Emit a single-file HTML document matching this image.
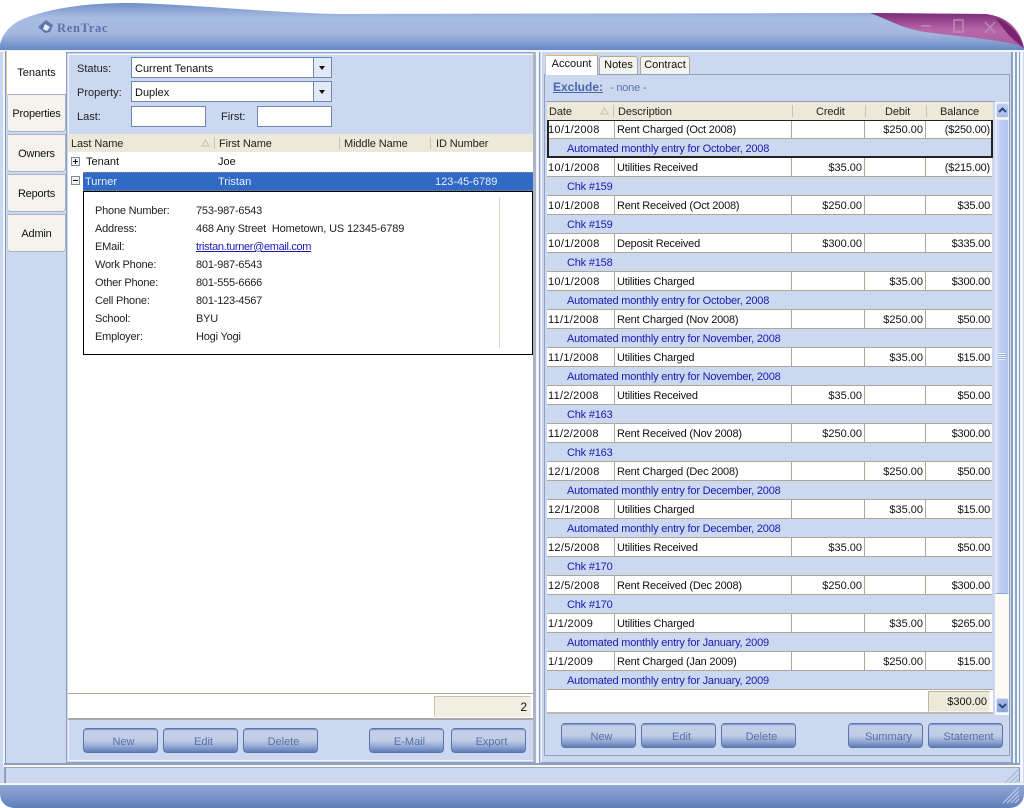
<!DOCTYPE html>
<html><head><meta charset="utf-8"><title>RenTrac</title>
<style>
html,body{margin:0;padding:0;background:#fff}
#p{position:relative;width:1024px;height:808px;overflow:hidden;background:#fff;font:11px/14px "Liberation Sans",sans-serif;color:#111}
#p div,#p span,#p a{position:absolute;display:block;white-space:nowrap;box-sizing:border-box}
.tab{left:7px;width:59px;background:#f4f3ee;border:1px solid #a9b4c8;border-left:1px solid #c8cfdc;border-radius:0 0 4px 4px;text-align:center;letter-spacing:-.2px}
.tab span{left:0;width:100%;top:12px;text-align:center}
.lbl{color:#222;font-size:11px}
.inp{background:#fff;border:1px solid #6f86ae;height:21px}
.inp span{left:3px;top:3px;font-size:11px}
.dd{right:0;top:0;bottom:0;width:18px;background:#e2e9f7;border-left:1px solid #6f86ae}
.dd:after{content:"";position:absolute;left:5px;top:8px;border:3px solid transparent;border-top:4px solid #111;border-bottom:0}
.hd{background:#ece9d8;height:18px;letter-spacing:-.1px}
.hd span{top:3px;color:#222}
.sep{top:3px;width:1px;height:12px;background:#c8c5b2}
.btn{height:25px;width:75px;border-radius:4px;border:1px solid #5a76ae;background:linear-gradient(#6f8bc0 0,#c4d0e8 8%,#c0cde6 50%,#8ea4d0 78%,#5f7db8 100%);color:#5670a6;text-align:center;line-height:26px;font-size:11px;padding-left:6px}
.r{left:547px;width:445px;height:19px;background:#fff;border-bottom:1px solid #aca899;letter-spacing:-.2px}
.r .d{left:0;width:68px;height:18px;padding-left:1px;top:0;line-height:20px;border-right:1px solid #aca899;letter-spacing:.3px}
.r .s{left:68px;width:177px;height:18px;padding-left:2px;top:0;line-height:20px;border-right:1px solid #aca899}
.r .c{left:245px;width:73px;height:18px;padding-right:2px;top:0;line-height:20px;text-align:right;border-right:1px solid #aca899;letter-spacing:0}
.r .e{left:318px;width:61px;height:18px;padding-right:2px;top:0;line-height:20px;text-align:right;border-right:1px solid #aca899;letter-spacing:0}
.r .b{left:379px;width:66px;height:18px;padding-right:2px;top:0;line-height:20px;text-align:right}
.n{left:547px;width:445px;height:19px;background:#ccd8f0;border-bottom:1px solid #aca899;color:#1a1ab0;padding-left:20px;line-height:20px;letter-spacing:-.2px}
.k{left:95px;color:#222;letter-spacing:-.2px}.v{left:196px;color:#222;letter-spacing:-.2px}
.pm{left:71px;width:9px;height:9px;border:1px solid #7f8a9c;background:#f2f2f2}
.pm:before{content:"";position:absolute;left:1px;top:3px;width:5px;height:1px;background:#111}
.rt{background:#f4f3ee;border:1px solid #a9a89a;border-bottom:0;border-radius:3px 3px 0 0;text-align:center}
.l{background:#8ea0bf}
.w{background:#f2f5fb}
</style></head><body>
<div id="p">
<svg style="position:absolute;left:0;top:0" width="1024" height="60" viewBox="0 0 1024 60">
<defs>
<linearGradient id="g" x1="0" y1="0" x2="0" y2="1"><stop offset="0" stop-color="#6f8fc9"/><stop offset=".3" stop-color="#a9bde2"/><stop offset=".62" stop-color="#a4b8df"/><stop offset="1" stop-color="#5e82c0"/></linearGradient>
<linearGradient id="m" x1="0" y1="0" x2="0" y2="1"><stop offset="0" stop-color="#7d2c78"/><stop offset=".5" stop-color="#b868aa"/><stop offset="1" stop-color="#a85a9e"/></linearGradient>
</defs>
<path d="M0 52V44C4 30 14 22 28 17C60 6 95 3 130 3C190 4 270 13 340 14L870 13L985 14C1006 16 1020 28 1024 48V52Z" fill="url(#g)"/>
<path d="M870 13L985 14C1006 16 1020 28 1024 48C1012 40 960 37 925 32C900 28 890 20 870 13Z" fill="url(#m)"/>
<path d="M1024 48C1020 32 1008 22 996 18C1002 28 1010 38 1024 48Z" fill="#7a2470"/>
<g fill="none" stroke="#b98ab8" stroke-width="1.500"><path d="M921 26H931"/><path d="M954 20H963V32H954Z"/><path d="M985 22L995 33M995 22L985 33"/></g>
<path d="M38 27L46 20L53 25L50 32L45 33Z" fill="#5d78ad"/><path d="M45 24L50 27L47 31L43 29Z" fill="#e9eef7"/>
</svg>
<div style="left:57px;top:20px;font:bold 12.5px/16px 'Liberation Serif',serif;color:#5a72a8;letter-spacing:.7px">RenTrac</div>

<div style="left:0;top:50px;width:1024px;height:736px;background:#ccd8f0"></div>
<div class="w" style="left:0;top:50px;width:1024px;height:2px"></div>
<div class="w" style="left:3px;top:51px;width:2px;height:715px"></div>
<div class="l" style="left:5px;top:51px;width:1px;height:733px;background:#7d97c6"></div>
<div class="l" style="left:1012px;top:52px;width:1px;height:714px"></div>
<div class="w" style="left:1013px;top:52px;width:2px;height:714px"></div>
<div class="l" style="left:1015px;top:52px;width:2px;height:714px;background:#8ea6cf"></div>
<div class="w" style="left:1017px;top:52px;width:2px;height:714px"></div>
<div class="l" style="left:1019px;top:52px;width:1px;height:730px;background:#7d97c6"></div>
<div class="w" style="left:1020px;top:52px;width:3px;height:730px"></div>

<!-- left tabs -->
<div style="left:6px;top:51px;width:60px;height:43px;background:#fff;border-left:1px solid #e8c58a"><span style="left:0;width:100%;top:14px;text-align:center;font-size:11px;line-height:16px">Tenants</span></div>
<div class="tab" style="top:94px;height:38px"><span>Properties</span></div>
<div class="tab" style="top:134px;height:38px"><span>Owners</span></div>
<div class="tab" style="top:174px;height:38px"><span>Reports</span></div>
<div class="tab" style="top:214px;height:38px"><span>Admin</span></div>

<!-- left panel -->
<div style="left:66px;top:52px;width:468px;height:711px;border:1px solid #8ea0bf;border-right:0"></div>
<div style="left:68px;top:54px;width:466px;height:707px;border:1px solid #f2f5fb;border-right:0"></div>
<div class="lbl" style="left:77px;top:61px;line-height:16px">Status:</div>
<div class="lbl" style="left:77px;top:85px;line-height:16px">Property:</div>
<div class="lbl" style="left:77px;top:109px;line-height:16px">Last:</div>
<div class="lbl" style="left:221px;top:109px;line-height:16px">First:</div>
<div class="inp" style="left:131px;top:57px;width:201px"><span style="top:4px">Current Tenants</span><div class="dd"></div></div>
<div class="inp" style="left:131px;top:81px;width:201px"><span style="top:4px">Duplex</span><div class="dd"></div></div>
<div class="inp" style="left:131px;top:106px;width:75px"></div>
<div class="inp" style="left:257px;top:106px;width:75px"></div>

<div style="left:68px;top:134px;width:465px;height:585px;background:#fff"></div>
<div class="hd" style="left:68px;top:134px;width:465px"><span style="left:3px">Last Name</span><svg style="position:absolute;left:133px;top:5px" width="9" height="8"><path d="M4.500 1L8 7H1Z" fill="none" stroke="#c4c2b0"/></svg><div class="sep" style="left:146px"></div><span style="left:151px">First Name</span><div class="sep" style="left:271px"></div><span style="left:276px">Middle Name</span><div class="sep" style="left:362px"></div><span style="left:368px">ID Number</span></div>
<div class="pm" style="top:157px"></div><div style="left:75px;top:159px;width:1px;height:5px;background:#111"></div>
<div style="left:86px;top:155px;font-size:11px;line-height:14px">Tenant</div><div style="left:218px;top:155px;font-size:11px">Joe</div>
<div class="pm" style="top:176px"></div>
<div style="left:83px;top:172px;width:450px;height:19px;background:#316ac5;border-top:1px dotted #8a8a8a;border-bottom:1px dotted #8a8a8a;color:#e8eefa"><span style="left:2px;top:2px;font-size:11px">Turner</span><span style="left:135px;top:2px;font-size:11px">Tristan</span><span style="left:352px;top:2px;font-size:11px">123-45-6789</span></div>
<div style="left:83px;top:191px;width:450px;height:164px;border:1px solid #000;background:#fff"></div>
<div style="left:499px;top:198px;width:1px;height:150px;background:#d8d6c8"></div>
<div class="k" style="top:204px">Phone Number:</div><div class="v" style="top:204px">753-987-6543</div>
<div class="k" style="top:222px">Address:</div><div class="v" style="top:222px;letter-spacing:-.15px">468 Any Street&nbsp; Hometown, US 12345-6789</div>
<div class="k" style="top:240px">EMail:</div><a class="v" style="top:240px;color:#1a1ab0;text-decoration:underline;letter-spacing:-.33px">tristan.turner@email.com</a>
<div class="k" style="top:258px">Work Phone:</div><div class="v" style="top:258px">801-987-6543</div>
<div class="k" style="top:276px">Other Phone:</div><div class="v" style="top:276px">801-555-6666</div>
<div class="k" style="top:294px">Cell Phone:</div><div class="v" style="top:294px">801-123-4567</div>
<div class="k" style="top:312px">School:</div><div class="v" style="top:312px">BYU</div>
<div class="k" style="top:330px">Employer:</div><div class="v" style="top:330px">Hogi Yogi</div>
<div style="left:68px;top:693px;width:465px;height:1px;background:#aca899"></div>
<div style="left:68px;top:718px;width:465px;height:2px;background:#a8a8a8"></div>
<div style="left:434px;top:696px;width:97px;height:21px;background:#f1efe2;border:1px solid #c4c2b0;border-right-color:#eee;border-bottom-color:#eee;text-align:right;padding-right:3px;line-height:21px;font-size:12px">2</div>
<div class="btn" style="left:83px;top:728px">New</div>
<div class="btn" style="left:163px;top:728px">Edit</div>
<div class="btn" style="left:243px;top:728px">Delete</div>
<div class="btn" style="left:369px;top:728px">E-Mail</div>
<div class="btn" style="left:451px;top:728px">Export</div>

<!-- splitter -->
<div style="left:533px;top:52px;width:3px;height:711px;background:#aab4c4"></div>
<div style="left:536px;top:52px;width:3px;height:711px;background:#f2f5fb"></div>
<div style="left:539px;top:52px;width:1px;height:711px;background:#8ea0bf"></div>

<!-- right panel -->
<div style="left:541px;top:52px;width:471px;height:711px;border:1px solid #8ea0bf;border-top:0;border-left:0;box-shadow:inset 1px 0 0 #f2f5fb"></div>
<div style="left:544px;top:74px;width:466px;height:682px;border:1px solid #8ea0bf"></div>
<div style="left:545px;top:55px;width:53px;height:20px;background:#fff;border-top:1px solid #e8b860;border-left:1px solid #c0c8d8;border-right:1px solid #8ea0bf;text-align:center;line-height:16px">Account</div>
<div class="rt" style="left:599px;top:56px;width:39px;height:18px;line-height:16px">Notes</div>
<div class="rt" style="left:640px;top:56px;width:50px;height:18px;line-height:16px">Contract</div>
<div style="left:553px;top:80px;font-weight:bold;font-size:12px;color:#4a68a8;text-decoration:underline">Exclude:</div>
<div style="left:610px;top:81px;color:#5a72a8;letter-spacing:-.2px">- none -</div>

<div style="left:546px;top:101px;width:449px;height:1px;background:#8ea0bf"></div>
<div class="hd" style="left:547px;top:102px;width:446px"><span style="left:2px">Date</span><svg style="position:absolute;left:53px;top:5px" width="9" height="8"><path d="M4.500 1L8 7H1Z" fill="none" stroke="#c4c2b0"/></svg><div class="sep" style="left:66px"></div><span style="left:71px">Description</span><div class="sep" style="left:245px"></div><span style="left:269px">Credit</span><div class="sep" style="left:318px"></div><span style="left:338px">Debit</span><div class="sep" style="left:379px"></div><span style="left:393px">Balance</span></div>

<div class="r" style="top:120px"><span class="d">10/1/2008</span><span class="s">Rent Charged (Oct 2008)</span><span class="c"></span><span class="e">$250.00</span><span class="b">($250.00)</span></div><div class="n" style="top:139px">Automated monthly entry for October, 2008</div>
<div class="r" style="top:158px"><span class="d">10/1/2008</span><span class="s">Utilities Received</span><span class="c">$35.00</span><span class="e"></span><span class="b">($215.00)</span></div><div class="n" style="top:177px">Chk #159</div>
<div class="r" style="top:196px"><span class="d">10/1/2008</span><span class="s">Rent Received (Oct 2008)</span><span class="c">$250.00</span><span class="e"></span><span class="b">$35.00</span></div><div class="n" style="top:215px">Chk #159</div>
<div class="r" style="top:234px"><span class="d">10/1/2008</span><span class="s">Deposit Received</span><span class="c">$300.00</span><span class="e"></span><span class="b">$335.00</span></div><div class="n" style="top:253px">Chk #158</div>
<div class="r" style="top:272px"><span class="d">10/1/2008</span><span class="s">Utilities Charged</span><span class="c"></span><span class="e">$35.00</span><span class="b">$300.00</span></div><div class="n" style="top:291px">Automated monthly entry for October, 2008</div>
<div class="r" style="top:310px"><span class="d">11/1/2008</span><span class="s">Rent Charged (Nov 2008)</span><span class="c"></span><span class="e">$250.00</span><span class="b">$50.00</span></div><div class="n" style="top:329px">Automated monthly entry for November, 2008</div>
<div class="r" style="top:348px"><span class="d">11/1/2008</span><span class="s">Utilities Charged</span><span class="c"></span><span class="e">$35.00</span><span class="b">$15.00</span></div><div class="n" style="top:367px">Automated monthly entry for November, 2008</div>
<div class="r" style="top:386px"><span class="d">11/2/2008</span><span class="s">Utilities Received</span><span class="c">$35.00</span><span class="e"></span><span class="b">$50.00</span></div><div class="n" style="top:405px">Chk #163</div>
<div class="r" style="top:424px"><span class="d">11/2/2008</span><span class="s">Rent Received (Nov 2008)</span><span class="c">$250.00</span><span class="e"></span><span class="b">$300.00</span></div><div class="n" style="top:443px">Chk #163</div>
<div class="r" style="top:462px"><span class="d">12/1/2008</span><span class="s">Rent Charged (Dec 2008)</span><span class="c"></span><span class="e">$250.00</span><span class="b">$50.00</span></div><div class="n" style="top:481px">Automated monthly entry for December, 2008</div>
<div class="r" style="top:500px"><span class="d">12/1/2008</span><span class="s">Utilities Charged</span><span class="c"></span><span class="e">$35.00</span><span class="b">$15.00</span></div><div class="n" style="top:519px">Automated monthly entry for December, 2008</div>
<div class="r" style="top:538px"><span class="d">12/5/2008</span><span class="s">Utilities Received</span><span class="c">$35.00</span><span class="e"></span><span class="b">$50.00</span></div><div class="n" style="top:557px">Chk #170</div>
<div class="r" style="top:576px"><span class="d">12/5/2008</span><span class="s">Rent Received (Dec 2008)</span><span class="c">$250.00</span><span class="e"></span><span class="b">$300.00</span></div><div class="n" style="top:595px">Chk #170</div>
<div class="r" style="top:614px"><span class="d">1/1/2009</span><span class="s">Utilities Charged</span><span class="c"></span><span class="e">$35.00</span><span class="b">$265.00</span></div><div class="n" style="top:633px">Automated monthly entry for January, 2009</div>
<div class="r" style="top:652px"><span class="d">1/1/2009</span><span class="s">Rent Charged (Jan 2009)</span><span class="c"></span><span class="e">$250.00</span><span class="b">$15.00</span></div><div class="n" style="top:671px">Automated monthly entry for January, 2009</div>
<div style="left:547px;top:120px;width:446px;height:38px;border:2px solid #222;border-top-width:1px"></div>
<div style="left:547px;top:689px;width:446px;height:25px;background:#fff;border-top:1px solid #aca899;border-bottom:2px solid #b8b8b0"></div>
<div style="left:928px;top:691px;width:62px;height:21px;background:#ece9d8;border:1px solid #b8b6a4;border-right-color:#f4f4ee;border-bottom-color:#f4f4ee;text-align:right;padding-right:2px;line-height:21px;font-size:11px">$300.00</div>

<!-- scrollbar -->
<div style="left:995px;top:102px;width:14px;height:613px;background:#fbfaf5"></div>
<div style="left:996px;top:103px;width:13px;height:15px;background:linear-gradient(#c0cff0,#a8bce8);border:1px solid #dfe6f6;border-radius:2px"></div>
<svg style="position:absolute;left:996px;top:103px" width="13" height="15"><path d="M3 9L6.500 5.500L10 9" fill="none" stroke="#2c4a80" stroke-width="2"/></svg>
<div style="left:995px;top:119px;width:14px;height:475px;background:linear-gradient(90deg,#dbe4f8,#bccdf2 40%,#b4c6ee);border:1px solid #e4eafa;border-bottom:1px solid #8ea6d8"></div>
<div style="left:998px;top:353px;width:7px;height:7px;background:repeating-linear-gradient(#eef2fb 0,#eef2fb 1px,#9ab0dc 1px,#9ab0dc 2px)"></div>
<div style="left:996px;top:698px;width:13px;height:15px;background:linear-gradient(#a8bce8,#8ea8dc);border:1px solid #dfe6f6;border-radius:2px"></div>
<svg style="position:absolute;left:996px;top:698px" width="13" height="15"><path d="M3 6L6.500 9.500L10 6" fill="none" stroke="#2c4a80" stroke-width="2"/></svg>

<div class="btn" style="left:561px;top:723px">New</div>
<div class="btn" style="left:641px;top:723px">Edit</div>
<div class="btn" style="left:721px;top:723px">Delete</div>
<div class="btn" style="left:848px;top:723px">Summary</div>
<div class="btn" style="left:928px;top:723px">Statement</div>

<!-- status + bottom -->
<div style="left:4px;top:763px;width:1016px;height:2px;background:#8ea0bf"></div>
<div style="left:4px;top:765px;width:1016px;height:2px;background:#f2f5fb"></div>
<div style="left:4px;top:767px;width:1016px;height:1px;background:#a8a8a8"></div>
<div style="left:4px;top:768px;width:1px;height:15px;background:#a8a8a8"></div>
<svg style="position:absolute;left:1004px;top:768px" width="16" height="16"><path d="M15 1L1 15M15 6L6 15M15 11L11 15" stroke="#a8b4cc" stroke-width="1"/></svg>
<div style="left:0;top:783px;width:1024px;height:2px;background:#f2f5fb"></div>
<div style="left:0;top:785px;width:1024px;height:23px;background:linear-gradient(#8fa5d4,#7d96cb 45%,#5f7fba);border-radius:0 0 14px 14px"></div>
<svg style="position:absolute;left:1002px;top:786px" width="18" height="18"><path d="M17 1L1 17M17 5L5 17M17 9L9 17M17 13L13 17" stroke="#c4d0e8" stroke-width="1"/></svg>
</div>
</body></html>
